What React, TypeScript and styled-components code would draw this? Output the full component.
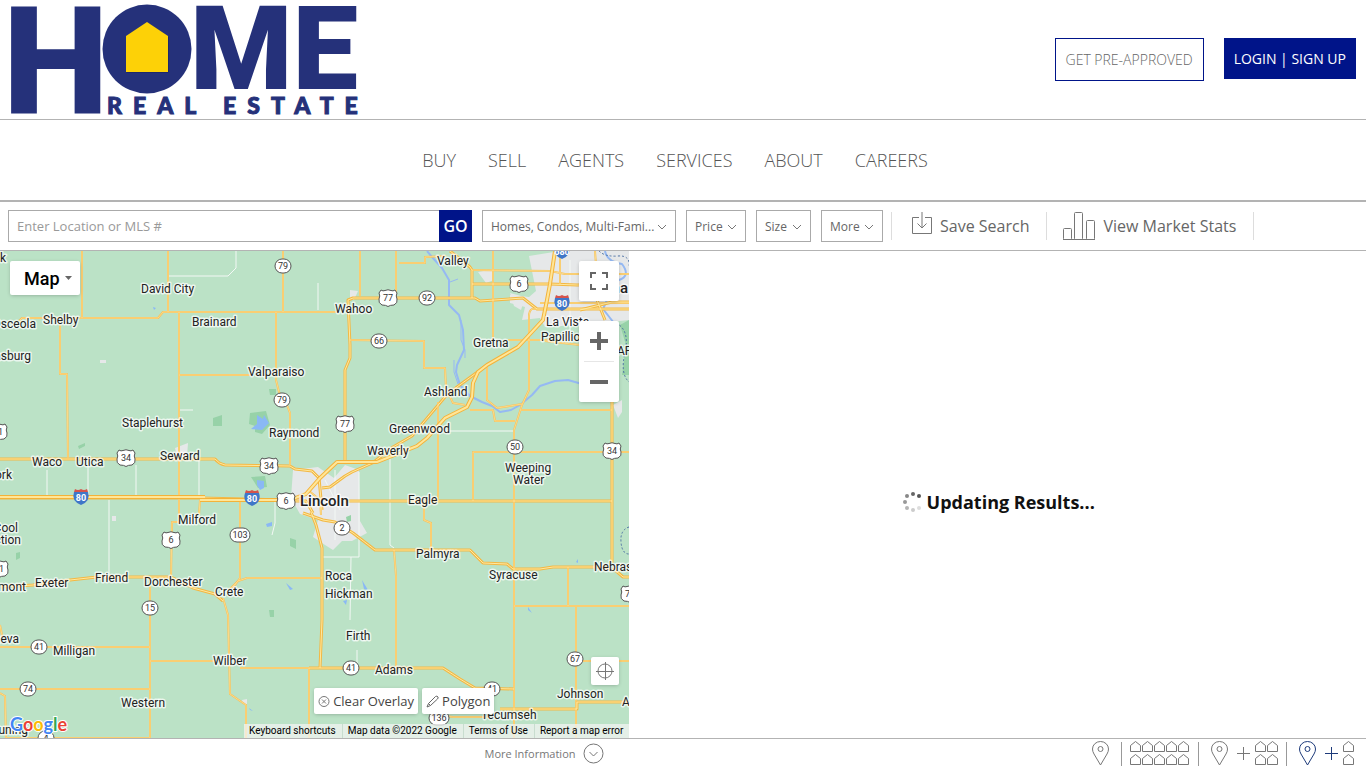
import React from "react";
import styled, { createGlobalStyle, css } from "styled-components";

const navy = "#001489";
const logoBlue = "#25317a";
const line = "#b3b3b3";

const GlobalStyle = createGlobalStyle`
  *, *::before, *::after { box-sizing: border-box; }
  html, body { margin: 0; }
  body {
    background: #fff;
    color: #666;
    font-family: "Open Sans", "Noto Sans", sans-serif;
    font-size: 12px;
  }
  button, input, select { font: inherit; color: inherit; margin: 0; }
  button { cursor: pointer; }
  a { color: inherit; text-decoration: none; }
`;

const Page = styled.div`
  display: flex;
  flex-direction: column;
  min-height: 100vh;
`;

/* ---------- header ---------- */

const Header = styled.header`
  display: flex;
  justify-content: space-between;
  align-items: flex-start;
  padding: 5px 10px 4px;
  border-bottom: 1px solid ${line};
`;

const LogoSvg = styled.svg`
  display: block;
  width: 348px;
  height: 110px;
  overflow: visible;
`;

const LogoBig = styled.text`
  font-family: Roboto, sans-serif;
  font-weight: 900;
  fill: ${logoBlue};
`;

const LogoSmall = styled.text`
  font-family: Lato, sans-serif;
  font-weight: 900;
  font-size: 23px;
  letter-spacing: 11px;
  fill: ${logoBlue};
  stroke: ${logoBlue};
  stroke-width: 1px;
`;

const Account = styled.div`
  display: flex;
  align-items: flex-start;
  gap: 20px;
  padding-top: 33px;
`;

const AccountLink = styled.a<{ $solid?: boolean }>`
  padding: 10px;
  font-size: 14px;
  line-height: 21px;
  font-weight: 300;
  ${(p) =>
    p.$solid
      ? css`
          background: ${navy};
          color: #fff;
          font-weight: 400;
        `
      : css`
          border: 1px solid ${navy};
          color: #666;
        `}
`;

const Nav = styled.nav`
  display: flex;
  justify-content: center;
  gap: 32px;
  padding: 28px 16px 28px 0;
  border-bottom: 2px solid ${line};
  font-size: 18px;
  line-height: 24px;
  font-weight: 300;
  color: #555;
`;

/* ---------- search bar ---------- */

const SearchBar = styled.div`
  display: flex;
  align-items: center;
  padding: 8px;
  border-bottom: 1px solid ${line};
`;

const LocationForm = styled.form`
  display: flex;
  flex: 0 1 464px;
  height: 32px;
  margin-right: 10px;
`;

const LocationInput = styled.input`
  flex: 1;
  min-width: 0;
  padding: 0 8px;
  border: 1px solid #aaa;
  border-right: 0;
  border-radius: 0;
  font-size: 13px;
  &::placeholder { color: #999; opacity: 1; }
`;

const GoButton = styled.button`
  width: 33px;
  padding: 0;
  border: 0;
  background: ${navy};
  color: #fff;
  font-size: 16px;
  font-weight: 600;
`;

const Filters = styled.div`
  display: flex;
  gap: 10px;
`;

const SelectBox = styled.div<{ $width: number }>`
  position: relative;
  width: ${(p) => p.$width}px;
  svg {
    position: absolute;
    right: 9px;
    top: 13px;
    pointer-events: none;
  }
`;

const FilterSelect = styled.select`
  appearance: none;
  display: block;
  width: 100%;
  height: 32px;
  padding: 0 8px;
  border: 1px solid #aaa;
  border-radius: 0;
  background: #fff;
  font-size: 12px;
`;

const BarActions = styled.div`
  display: flex;
  align-items: center;
  margin-left: 8px;
  height: 28px;
  border-left: 1px solid #ddd;
`;

const BarAction = styled.button`
  display: flex;
  align-items: center;
  gap: 8px;
  height: 28px;
  padding: 0 17px 0 16px;
  border: 0;
  border-right: 1px solid #ddd;
  background: none;
  font-size: 16px;
  line-height: 22px;
  white-space: nowrap;
  &:first-child { padding-left: 20px; }
`;

/* ---------- map ---------- */

const Content = styled.main`
  display: flex;
  flex: 1;
  min-height: 487px;
`;

const MapPanel = styled.section`
  position: relative;
  flex: 0 0 calc(46% + 1px);
  overflow: hidden;
  background: #bbe2c6;
`;

const MapCanvas = styled.svg`
  position: absolute;
  inset: 0;
  width: 100%;
  height: 100%;
`;

const Town = styled.text<{ $city?: boolean }>`
  font-family: Roboto, sans-serif;
  font-size: ${(p) => (p.$city ? 15 : 12)}px;
  font-weight: ${(p) => (p.$city ? 500 : 400)};
  fill: #222;
  stroke: #fff;
  stroke-width: 3px;
  stroke-linejoin: round;
  stroke-opacity: 0.7;
  paint-order: stroke;
`;

const ShieldText = styled.text<{ $light?: boolean }>`
  font-family: Roboto, sans-serif;
  font-size: 9px;
  font-weight: ${(p) => (p.$light ? 700 : 400)};
  text-anchor: middle;
  fill: ${(p) => (p.$light ? "#fff" : "#333")};
`;

const floating = css`
  border: 0;
  border-radius: 2px;
  background: #fff;
  box-shadow: 0 1px 4px -1px rgba(0, 0, 0, 0.3);
`;

const MapTypeBox = styled.div`
  position: absolute;
  left: 10px;
  top: 10px;
  width: 70px;
  svg {
    position: absolute;
    right: 8px;
    top: 15px;
    pointer-events: none;
  }
`;

const MapTypeSelect = styled.select`
  ${floating}
  appearance: none;
  display: block;
  width: 100%;
  height: 34px;
  padding: 0 14px;
  font-family: Roboto, sans-serif;
  font-size: 18px;
  font-weight: 500;
  color: #000;
`;

const MapControls = styled.div`
  position: absolute;
  right: 10px;
  top: 10px;
  display: flex;
  flex-direction: column;
  gap: 20px;
`;

const ControlGroup = styled.div`
  ${floating}
  display: flex;
  flex-direction: column;
  align-items: center;
`;

const ControlButton = styled.button`
  display: flex;
  align-items: center;
  justify-content: center;
  width: 40px;
  height: 40px;
  padding: 0;
  border: 0;
  background: none;
`;

const ControlRule = styled.div`
  width: 30px;
  height: 1px;
  background: #e6e6e6;
`;

const LocateButton = styled.button`
  ${floating}
  position: absolute;
  right: 10px;
  bottom: 53px;
  display: flex;
  align-items: center;
  justify-content: center;
  width: 28px;
  height: 28px;
  padding: 0;
`;

const DrawTools = styled.div`
  position: absolute;
  right: 135px;
  bottom: 24px;
  display: flex;
  gap: 4px;
`;

const DrawButton = styled.button`
  ${floating}
  display: flex;
  align-items: center;
  gap: 3px;
  height: 26px;
  padding: 0 4px;
  font-size: 13px;
  line-height: 18px;
  color: #444;
  white-space: nowrap;
`;

const Attribution = styled.div`
  position: absolute;
  right: 0;
  bottom: 0;
  display: flex;
  height: 14px;
  background: rgba(245, 245, 245, 0.7);
  font-family: Roboto, sans-serif;
  font-size: 10px;
  line-height: 14px;
  color: #000;
  white-space: nowrap;
`;

const AttributionItem = styled.a`
  padding: 0 6px 0 5px;
  border-right: 1px solid #c8ddcf;
  &:last-child { border-right: 0; }
`;

const GoogleMark = styled.text`
  font-family: Lato, sans-serif;
  font-size: 18px;
  font-weight: 700;
  stroke: #fff;
  stroke-width: 2px;
  paint-order: stroke;
`;

/* ---------- results and footer ---------- */

const Results = styled.section`
  display: flex;
  flex: 1;
  align-items: center;
  justify-content: center;
  gap: 4px;
  padding-top: 14px;
  padding-left: 2px;
`;

const Status = styled.p`
  margin: 0;
  font-size: 18px;
  line-height: 24px;
  font-weight: 700;
  color: #111;
`;

const Footer = styled.footer`
  display: flex;
  align-items: center;
  height: 30px;
  border-top: 1px solid ${line};
`;

const MoreArea = styled.div`
  display: flex;
  flex: 1;
  justify-content: center;
  padding-left: 8px;
`;

const MoreButton = styled.button`
  display: flex;
  align-items: center;
  gap: 7px;
  padding: 0;
  border: 0;
  background: none;
  font-size: 11px;
  line-height: 16px;
  color: #777;
`;

const LayoutChoices = styled.div`
  display: flex;
  align-items: center;
  padding-right: 11px;
`;

const LayoutButton = styled.button<{ $active?: boolean; $list?: boolean }>`
  display: flex;
  align-items: center;
  height: 24px;
  padding: ${(p) => (p.$list ? "0 8px" : "0 7px 0 12px")};
  border: 0;
  border-right: 1px solid #999;
  background: none;
  color: ${(p) => (p.$active ? "#1d3a7a" : "#777")};
  &:first-child { padding-right: 12px; }
  &:last-child { border: 0; padding-right: 0; }
`;

const LayoutIcon = styled.svg`
  display: block;
  fill: none;
  stroke: currentColor;
`;

const HouseIcon = styled(LayoutIcon)`
  color: #777;
`;

/* ---------- map data ---------- */

const minorRoads = [
  "M82 251V318", "M18 322L22 318H158L163 312H336", "M168 251V312",
  "M179 312V522H172L171 577", "M283 251V312", "M276 312V380L279 392L287 405L290 413V465",
  "M60 325V374H67L68 458", "M179 375H250", "M360 251V296", "M396 251V298", "M399 263H425V257L446 256",
  "M493 251V340", "M487 366V400L497 408L522 404", "M350 340L424 341V368H445L446 388L453 403L465 405",
  "M438 402V501", "M470 410H493L495 421H515", "M520 410H612", "M473 501V452H629",
  "M537 309H532Q529 311 529 316V390L522 405L514 430V738", "M508 340H548", "M545 341L580 345",
  "M424 503V520L431 523V550", "M394 550L396 576V668", "M568 567V606", "M514 606H629", "M576 607V738",
  "M240 499V578L233 588", "M322 578H247L238 581L229 590", "M150 585V738", "M0 647H150", "M150 661H215",
  "M0 689H150", "M0 693L5 696L6 738H150", "M0 625L3 640", "M200 500L199 515", "M240 668H309V738",
  "M583 661H629", "M430 714L453 717H490", "M223 598L228 615L230 694L246 705V738",
  "M472 270L550 271L565 274H629", "M595 251L596 265L605 290", "M560 284V251",
  "M540 303H629", "M578 345L618 346", "M308 490L320 500L321 515",
];

const majorRoads = [
  "M0 459H215Q219 464 225 465L290 466L295 469L312 471L319 478L322 510",
  "M0 498L200 498L290 500", "M345 461V370L350 358V345L348 300L353 298H475L480 301L523 298L537 309H629",
  "M345 501H612", "M612 400V563", "M450 251L470 267L472 270V298", "M472 284H550L577 285H610",
  "M303 513L323 520L335 522L353 533L375 550H470L483 563L507 564L513 569H540L553 567H603L615 570L623 577H629",
  "M311 512L316 525L322 548V620L320 668", "M0 587L33 585L70 580L97 577H171L193 588L215 594L223 601",
  "M309 668H443L460 679L475 688L514 689", "M500 709H577V702H629", "M322 488L330 487L345 476L352 472L377 461",
  "M375 461L393 447L412 436L445 397L457 387L487 365", "M597 300L605 320", "M580 310L612 302H629",
  "M290 501H306L313 513",
];

const freeways = [
  "M200 500H290L306 494L320 478L337 462H377L417 446L427 438L445 418L467 407L472 397L473 383L478 372L487 365L518 347L543 320L547 300L550 284L555 251",
  "M0 497H205",
];

const whiteRoads = [
  "M168 276H228L236 268V251", "M318 283V310", "M179 410H193", "M47 470V495", "M88 465V495", "M136 465V495",
  "M199 460V495", "M109 500V575", "M275 500V523L272 535", "M390 455V545L394 548", "M445 431H514",
  "M359 472V557H322", "M351 557L350 620", "M357 650V665", "M570 260V330", "M325 480L340 510M335 470V540",
];

const urban = [
  "M293 470L318 467L334 478L345 465L359 470L360 521L367 533L352 541H342L333 550L325 545L313 537L318 520L300 514L291 498Z",
  "M529 256L560 251H629V320L610 322L578 325L545 327L540 318L522 320L525 307L510 303V295L529 297L536 291Z",
  "M478 272L494 269V280L486 283Z", "M510 293L525 297L521 310L514 306Z",
  "M100 360H106V363H100Z", "M175 448L188 443L187 457H177Z", "M350 290L358 291L354 300H350Z",
  "M112 516H116V521H112Z", "M242 700L247 699V704H243Z", "M613 405L622 400V412L618 418Z",
];

const parks = [
  "M250 413L266 411L270 425L262 434L255 432V426L249 424Z", "M213 418L222 415V426H213Z",
  "M269 389H276V395H270Z", "M251 477L265 476L267 487L258 488Z", "M290 538L296 540V549L290 546Z",
  "M78 446L85 443V446L79 449Z", "M16 553L20 552V558L16 560Z", "M346 517L351 515V521L347 522Z",
  "M620 325L629 320V375H622L626 345Z", "M269 610H274V617H270Z",
];

const lakes = [
  "M257 415L263 419L264 415L269 423L262 430L251 429L257 424Z", "M257 480L264 481V488L260 490L257 485Z",
  "M266 524L272 522V526L267 527Z", "M286 583L293 589L290 590Z", "M343 601L347 600L346 605Z",
  "M153 307L156 308L154 310Z", "M362 580L365 585L368 590L364 589Z", "M528 607L532 613L528 610Z",
  "M576 562L578 559V563Z", "M249 708L253 711L250 710Z",
];

type Label = [string, number, number, ("end" | "start")?];

const towns: Label[] = [
  ["k", 0, 262], ["David City", 141, 293], ["Shelby", 43, 324], ["Osceola", 36, 328, "end"],
  ["asburg", 31, 360, "end"], ["Brainard", 192, 326], ["Valparaiso", 248, 376], ["Staplehurst", 122, 427],
  ["Raymond", 269, 437], ["Waco", 32, 466], ["Utica", 76, 466], ["Seward", 160, 460], ["York", 12, 479, "end"],
  ["Milford", 178, 524], ["Exeter", 35, 587], ["Friend", 95, 582], ["Dorchester", 144, 586],
  ["Crete", 215, 596], ["Fairmont", 26, 591, "end"], ["Geneva", 19, 643, "end"], ["Milligan", 53, 655],
  ["Wilber", 213, 665], ["Western", 121, 707], ["Bruning", 28, 734, "end"], ["Cool", 18, 532, "end"],
  ["Junction", 21, 544, "end"], ["Valley", 437, 265], ["Wahoo", 335, 313], ["Gretna", 473, 347],
  ["Ashland", 424, 396], ["Greenwood", 389, 433], ["Waverly", 367, 455], ["La Vista", 546, 326],
  ["Papillion", 541, 341], ["AFB", 617, 355], ["Weeping", 505, 472], ["Water", 513, 484], ["Eagle", 408, 504],
  ["Palmyra", 416, 558], ["Syracuse", 489, 579], ["Roca", 325, 580], ["Hickman", 325, 598],
  ["Firth", 346, 640], ["Adams", 375, 674], ["Johnson", 557, 698], ["Tecumseh", 481, 719],
  ["Nebraska City", 594, 571], ["Auburn", 622, 706],
];

const usRoutes: Label[] = [
  ["77", 388, 298], ["77", 345, 424], ["34", 126, 458], ["34", 269, 466], ["6", 519, 284], ["34", 612, 451],
  ["6", 286, 501], ["6", 171, 540], ["81", -2, 432], ["81", -1, 569], ["75", 630, 594],
];

const stateRoutes: Label[] = [
  ["79", 283, 266], ["79", 282, 400], ["92", 427, 298], ["66", 379, 341], ["50", 515, 447], ["2", 342, 528],
  ["103", 240, 535], ["15", 150, 608], ["41", 39, 647], ["74", 28, 689], ["41", 351, 668], ["41", 492, 689],
  ["67", 575, 659], ["136", 439, 718], ["4", 46, 738],
];

const interstates: Label[] = [["80", 81, 497], ["80", 252, 498], ["80", 562, 303], ["680", 562, 251]];

const Paths = ({ list, ...rest }: { list: string[] } & React.SVGProps<SVGGElement>) => (
  <g {...rest}>{list.map((d) => <path key={d} d={d} />)}</g>
);

const MapDrawing = () => (
  <MapCanvas role="img" aria-label="Map of the Lincoln area">
    <g transform="translate(0 -251)">
      <Paths list={urban} fill="#e6e8e9" />
      <Paths list={parks} fill="#97d2a8" />
      <Paths list={lakes} fill="#8ab8f5" />
      <g fill="none" strokeLinejoin="round">
        <path
          d="M427 251L432 257L442 268L449 280V292L449 305L459 315L463 330L464 350L457 365L456 372L460 385L470 396L482 402L492 406L500 412L511 410L520 405L532 395L540 386L555 381L568 380L582 384L600 392L618 376"
          stroke="#95b9f3" strokeWidth="2"
        />
        <path d="M454 360V372L458 384M461 320V340L465 350V358M450 282L458 279" stroke="#95b9f3" strokeWidth="1" />
        <path d="M605 251Q607 262 622 264Q631 276 619 280Q607 284 607 300L603 309L614 323" stroke="#95b9f3" strokeWidth="2" />
        <path d="M599 251Q605 257 618 256T629 268M616 323Q630 330 625 352T629 382M629 527Q620 530 621 542T629 554" stroke="#4e72a4" strokeDasharray="2 2" />
        <Paths list={whiteRoads} stroke="#f3f8f5" strokeWidth="1" />
        <Paths list={minorRoads} stroke="#f5c35c" strokeWidth="2" />
        <Paths list={majorRoads} stroke="#f3b844" strokeWidth="3" />
        <Paths list={minorRoads} stroke="#fdd988" strokeWidth="1" />
        <Paths list={majorRoads} stroke="#ffe9a0" strokeWidth="1" />
        <Paths list={freeways} stroke="#f3b23a" strokeWidth="4" />
        <Paths list={freeways} stroke="#ffe698" strokeWidth="2" />
      </g>
      {usRoutes.map(([n, x, y]) => (
        <g key={`${x}-${y}`} transform={`translate(${x} ${y})`}>
          <path
            d="M-7 -8Q-5 -6.500 -3 -7.500Q0 -9 3 -7.500Q5 -6.500 7 -8L9 -5Q7.500 -2 9 1Q10 5 6 7Q2 7 0 8.500Q-2 7 -6 7Q-10 5 -9 1Q-7.500 -2 -9 -5Z"
            fill="#fff" stroke="#555"
          />
          <ShieldText y={3}>{n}</ShieldText>
        </g>
      ))}
      {stateRoutes.map(([n, x, y]) => {
        const half = n.length > 2 ? 10 : 8;
        return (
          <g key={`${x}-${y}`} transform={`translate(${x} ${y})`}>
            <rect x={-half} y={-7} width={half * 2} height={14} rx={7} fill="#fff" stroke="#555" />
            <ShieldText y={3}>{n}</ShieldText>
          </g>
        );
      })}
      {interstates.map(([n, x, y]) => (
        <g key={`${x}-${y}`} transform={`translate(${x} ${y})`}>
          <path d="M-7 -5H7Q10 4 0 8Q-10 4 -7 -5Z" fill="#3f76c8" />
          <path d="M-6 -8Q-3 -6 0 -8Q3 -6 6 -8L7 -5H-7Z" fill="#d5534c" />
          <ShieldText $light y={4}>{n}</ShieldText>
        </g>
      ))}
      {towns.map(([name, x, y, anchor]) => (
        <Town key={name} x={x} y={y} textAnchor={anchor}>{name}</Town>
      ))}
      <Town $city x={300} y={506}>Lincoln</Town>
      <Town $city x={628} y={293} textAnchor="end">Omaha</Town>
      <GoogleMark x={10} y={731}>
        <tspan fill="#4285f4">G</tspan>
        <tspan fill="#ea4335">o</tspan>
        <tspan fill="#fbbc05">o</tspan>
        <tspan fill="#4285f4">g</tspan>
        <tspan fill="#34a853">l</tspan>
        <tspan fill="#ea4335">e</tspan>
      </GoogleMark>
    </g>
  </MapCanvas>
);

/* ---------- small drawings ---------- */

const Logo = () => (
  <LogoSvg viewBox="10 5 348 110" role="img" aria-label="HOME Real Estate">
    <LogoBig x={3} y={114} fontSize={150}>H</LogoBig>
    <circle cx={147} cy={49} r={44.5} fill={logoBlue} />
    <path d="M126.500 37L147.500 22.500L168.500 37V72.500H126.500Z" fill="#16205c" />
    <path d="M126 36L147 22L168 36V72H126Z" fill="#fdd107" />
    <LogoBig x={190} y={89} fontSize={117}>ME</LogoBig>
    <LogoSmall x={107} y={114}>REAL ESTATE</LogoSmall>
  </LogoSvg>
);

const Chevron = () => (
  <svg width="10" height="8" fill="none" stroke="#777"><path d="M1 2L5 6L9 2" /></svg>
);

const Filter = ({ label, width }: { label: string; width: number }) => (
  <SelectBox $width={width}>
    <FilterSelect aria-label={label}><option>{label}</option></FilterSelect>
    <Chevron />
  </SelectBox>
);

const spinnerDots = [
  [10, 2, "#666"], [16, 4, "#555"], [16, 16, "#ddd"], [10, 18, "#ccc"],
  [4, 16, "#b5b5b5"], [2, 10, "#999"], [4, 4, "#888"],
] as const;

const Spinner = () => (
  <svg width="20" height="20" aria-hidden="true">
    {spinnerDots.map(([x, y, c]) => <circle key={`${x}-${y}`} cx={x} cy={y} r={2} fill={c} />)}
  </svg>
);

const pinPath = "M8.500 24L2 13Q.5 10.500 .5 8A8 7.500 0 0 1 16.500 8Q16.500 10.500 15 13Z";

const house = (x: number, y: number) => (
  <path key={`${x}-${y}`} d={`M${x + 0.5} ${y + 10.5}V${y + 4.5}L${x + 5.5} ${y + 0.5}L${x + 10.5} ${y + 4.5}V${y + 10.5}Z`} />
);

const Pin = () => (
  <LayoutIcon width="17" height="25"><path d={pinPath} /><circle cx="8.500" cy="8" r="2.500" /></LayoutIcon>
);

const Houses = ({ columns }: { columns: number }) => (
  <HouseIcon width={columns * 12} height="25">
    {Array.from({ length: columns }, (_, i) => [house(i * 12, 0), house(i * 12, 13)])}
  </HouseIcon>
);

const PinAndHouses = ({ columns }: { columns: number }) => (
  <>
    <Pin />
    <LayoutIcon width="27" height="25"><path d="M9 12.500H22M15.500 6V19" /></LayoutIcon>
    <Houses columns={columns} />
  </>
);

const navItems = ["BUY", "SELL", "AGENTS", "SERVICES", "ABOUT", "CAREERS"];

export default function App() {
  return (
    <Page>
      <GlobalStyle />
      <Header>
        <a href="#home"><Logo /></a>
        <Account>
          <AccountLink href="#pre-approved">GET PRE-APPROVED</AccountLink>
          <AccountLink $solid href="#login">LOGIN | SIGN UP</AccountLink>
        </Account>
      </Header>
      <Nav>
        {navItems.map((item) => <a key={item} href={`#${item.toLowerCase()}`}>{item}</a>)}
      </Nav>
      <SearchBar>
        <LocationForm onSubmit={(e) => e.preventDefault()}>
          <LocationInput aria-label="Location or MLS number" placeholder="Enter Location or MLS #" />
          <GoButton type="submit">GO</GoButton>
        </LocationForm>
        <Filters>
          <Filter label="Homes, Condos, Multi-Fami..." width={194} />
          <Filter label="Price" width={60} />
          <Filter label="Size" width={55} />
          <Filter label="More" width={62} />
        </Filters>
        <BarActions>
          <BarAction type="button">
            <svg width="20" height="28" fill="none" stroke="#777">
              <path d="M7 5.500H.5V21.500H19.500V5.500H13M10 0V16M5.500 11.500L10 16L14.500 11.500" />
            </svg>
            Save Search
          </BarAction>
          <BarAction type="button">
            <svg width="32" height="28" fill="none" stroke="#777">
              <rect x=".5" y="16.500" width="8" height="11" rx="1" />
              <rect x="11.500" y=".5" width="8" height="27" rx="1" />
              <rect x="23.500" y="8.500" width="8" height="19" rx="1" />
              <path d="M0 27.500H32" />
            </svg>
            View Market Stats
          </BarAction>
        </BarActions>
      </SearchBar>
      <Content>
        <MapPanel>
          <MapDrawing />
          <MapTypeBox>
            <MapTypeSelect aria-label="Map type"><option>Map</option></MapTypeSelect>
            <svg width="7" height="4"><path d="M0 0H7L3.500 4Z" fill="#666" /></svg>
          </MapTypeBox>
          <MapControls>
            <ControlGroup>
              <ControlButton type="button" aria-label="Toggle fullscreen">
                <svg width="18" height="18" fill="none" stroke="#666" strokeWidth="2">
                  <path d="M1 6V1H6M12 1H17V6M17 12V17H12M6 17H1V12" />
                </svg>
              </ControlButton>
            </ControlGroup>
            <ControlGroup>
              <ControlButton type="button" aria-label="Zoom in">
                <svg width="18" height="18" stroke="#666" strokeWidth="4"><path d="M0 9H18M9 0V18" /></svg>
              </ControlButton>
              <ControlRule />
              <ControlButton type="button" aria-label="Zoom out">
                <svg width="18" height="18" stroke="#666" strokeWidth="4"><path d="M0 9H18" /></svg>
              </ControlButton>
            </ControlGroup>
          </MapControls>
          <LocateButton type="button" aria-label="Find my location">
            <svg width="18" height="18" fill="none" stroke="#777">
              <circle cx="9" cy="9" r="7" /><path d="M0 9.500H18M9.500 0V18" />
            </svg>
          </LocateButton>
          <DrawTools>
            <DrawButton type="button">
              <svg width="12" height="13" fill="none" stroke="#777">
                <circle cx="6" cy="6.500" r="5" /><path d="M4 4.500L8 8.500M8 4.500L4 8.500" />
              </svg>
              Clear Overlay
            </DrawButton>
            <DrawButton type="button">
              <svg width="13" height="13" fill="none" stroke="#666">
                <path d="M1 12L2.500 8.500L9.500 1.500Q11 .5 12 2Q12.500 3 11.500 4L4.500 10.500ZM2.500 8.500L4.500 10.500" />
              </svg>
              Polygon
            </DrawButton>
          </DrawTools>
          <Attribution>
            <AttributionItem href="#shortcuts">Keyboard shortcuts</AttributionItem>
            <AttributionItem as="span">Map data ©2022 Google</AttributionItem>
            <AttributionItem href="#terms">Terms of Use</AttributionItem>
            <AttributionItem href="#report">Report a map error</AttributionItem>
          </Attribution>
        </MapPanel>
        <Results>
          <Spinner />
          <Status role="status">Updating Results...</Status>
        </Results>
      </Content>
      <Footer>
        <MoreArea>
          <MoreButton type="button">
            More Information
            <svg width="21" height="21" fill="none" stroke="#777">
              <circle cx="10.500" cy="10.500" r="9.500" /><path d="M6.500 9L10.500 13L14.500 9" />
            </svg>
          </MoreButton>
        </MoreArea>
        <LayoutChoices>
          <LayoutButton type="button" aria-label="Map only"><Pin /></LayoutButton>
          <LayoutButton $list type="button" aria-label="List only"><Houses columns={5} /></LayoutButton>
          <LayoutButton type="button" aria-label="Map and wide list"><PinAndHouses columns={2} /></LayoutButton>
          <LayoutButton type="button" $active aria-label="Map and narrow list"><PinAndHouses columns={1} /></LayoutButton>
        </LayoutChoices>
      </Footer>
    </Page>
  );
}
